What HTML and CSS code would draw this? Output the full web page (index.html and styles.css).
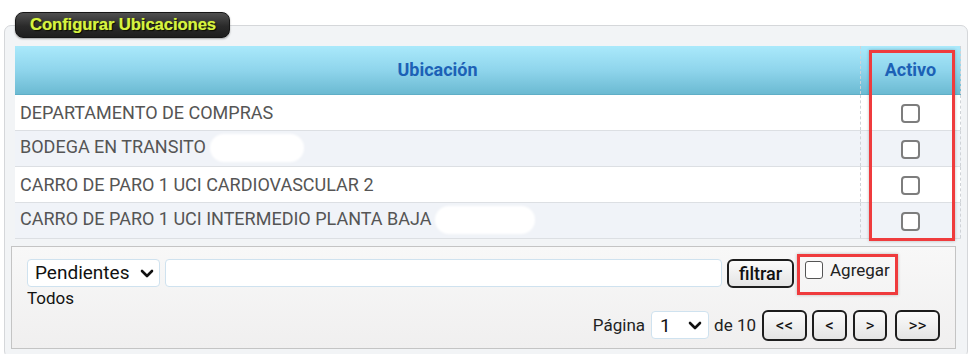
FILE: index.html
```html
<!DOCTYPE html>
<html lang="es">
<head>
<meta charset="utf-8">
<title>Configurar Ubicaciones</title>
<link rel="stylesheet" href="styles.css">
</head>
<body>
<div class="page">
  <div class="tab">Configurar Ubicaciones</div>
  <div class="panel">
    <div class="grid-wrap">
      <table class="grid">
        <thead>
          <tr><th class="c-name">Ubicación</th><th class="c-act">Activo</th></tr>
        </thead>
        <tbody>
          <tr><td class="c-name">DEPARTAMENTO DE COMPRAS<span class="blot blot-tiny"></span></td><td class="c-act"><span class="cb"></span></td></tr>
          <tr class="alt"><td class="c-name">BODEGA EN TRANSITO<span class="blot blot-a"></span></td><td class="c-act"><span class="cb"></span></td></tr>
          <tr><td class="c-name">CARRO DE PARO 1 UCI CARDIOVASCULAR 2</td><td class="c-act"><span class="cb"></span></td></tr>
          <tr class="alt"><td class="c-name">CARRO DE PARO 1 UCI INTERMEDIO PLANTA BAJA<span class="blot blot-b"></span></td><td class="c-act"><span class="cb"></span></td></tr>
        </tbody>
      </table>
      <div class="mark mark-col"></div>
    </div>
    <div class="footer">
      <div class="frow">
        <div class="sel sel-estado">
          <select><option>Pendientes</option><option>Todos</option></select>
          <svg class="chev" width="14" height="9" viewBox="0 0 14 9"><path d="M2 2 L7 7 L12 2" fill="none" stroke="#111" stroke-width="2.6" stroke-linecap="round" stroke-linejoin="round"/></svg>
        </div>
        <input class="txt" type="text">
        <button class="btn btn-filtrar">filtrar</button>
        <label class="agregar mark"><span class="cb cb-sm"></span>Agregar</label>
      </div>
      <div class="todos">Todos</div>
      <div class="pager">
        <span class="lbl">Página</span>
        <div class="sel sel-page">
          <select><option>1</option></select>
          <svg class="chev" width="14" height="9" viewBox="0 0 14 9"><path d="M2 2 L7 7 L12 2" fill="none" stroke="#111" stroke-width="2.6" stroke-linecap="round" stroke-linejoin="round"/></svg>
        </div>
        <span class="lbl lbl-de">de 10</span>
        <button class="btn pg pg-first">&lt;&lt;</button>
        <button class="btn pg pg-prev">&lt;</button>
        <button class="btn pg pg-next">&gt;</button>
        <button class="btn pg pg-last">&gt;&gt;</button>
      </div>
    </div>
  </div>
</div>
</body>
</html>
```
FILE: styles.css
```css
* { box-sizing: border-box; }
html, body { margin: 0; padding: 0; background: #ffffff; }
body { font-family: Roboto, "Liberation Sans", Arial, sans-serif; color: #222; }

.page { padding: 12px 4px 0 4px; }

.tab {
  position: relative;
  z-index: 2;
  width: 215px;
  height: 26px;
  margin-left: 11px;
  border: 1px solid #161616;
  border-radius: 8px;
  background: linear-gradient(#505050, #2a2a2a 55%, #1e1e1e);
  box-shadow: 0 1px 2px rgba(0,0,0,0.35);
  color: #d6f441;
  font-family: "Liberation Sans", Arial, sans-serif;
  font-weight: bold;
  font-size: 16.7px;
  line-height: 24px;
  padding-left: 14px;
  letter-spacing: -0.1px;
  text-shadow: 0 0 1px #8fa51c, 1px 1px 1px #000;
}

.panel {
  margin-top: -13px;
  border: 1px solid #d5d7da;
  border-radius: 7px;
  background: #f2f4f6;
  padding: 20px 6px 8px 6px;
}

.grid-wrap { position: relative; margin-left: 4px; width: 946px; }

.grid {
  width: 946px;
  border-collapse: collapse;
  table-layout: fixed;
  font-size: 18px;
}
.grid th {
  height: 48px;
  padding: 0;
  background: linear-gradient(#aae9fb, #8fd5ec 50%, #6bbad2);
  border-bottom: 1px solid #5faec6;
  color: #1c61b6;
  font-size: 18px;
  font-weight: bold;
  text-align: center;
}
.grid th.c-act { width: 100px; }
.grid .c-act {
  border-left: 1px dashed #cfd3d7;
  border-right: 1px dashed #cfd3d7;
  text-align: center;
}
.grid td {
  height: 36px;
  padding: 0 0 0 5px;
  background: #ffffff;
  border-bottom: 1px solid #dcdfe3;
  color: #555;
  white-space: nowrap;
}
.grid tr.alt td { background: #f0f3f8; }
.grid td.c-act { padding: 0; }

.blot {
  display: inline-block;
  vertical-align: middle;
  background: #ffffff;
  border-radius: 14px;
  filter: blur(1px);
}
.blot-tiny { width: 3px; height: 10px; margin-left: 3px; }
.blot-a { width: 94px; height: 28px; margin-left: 4px; }
.blot-b { width: 100px; height: 28px; margin-left: 4px; }

.cb {
  display: inline-block;
  width: 19px;
  height: 19px;
  border: 2px solid #7d7d7d;
  border-radius: 4px;
  background: #fff;
  vertical-align: middle;
}

.mark {
  border: 3px solid #ef3b3d;
  box-shadow: 0 0 3px rgba(0,0,0,0.25);
}
.mark-col {
  position: absolute;
  left: 854px;
  top: 4px;
  width: 86px;
  height: 191px;
  pointer-events: none;
}

.footer {
  margin-top: 7px;
  width: 945px;
  border: 1px solid #c4c4c4;
  background: linear-gradient(#f8f8f8, #f0efef);
  padding: 12px 15px 7px 15px;
  font-size: 17px;
}

.frow { display: flex; align-items: flex-start; height: 29px; }

.sel { position: relative; display: inline-block; }
.sel select {
  appearance: none;
  -webkit-appearance: none;
  height: 28px;
  border: 1px solid #cfe2ef;
  border-radius: 4px;
  background: #fff;
  font-family: Roboto, "Liberation Sans", Arial, sans-serif;
  color: #111;
  outline: none;
}
.sel .chev { position: absolute; top: 10px; pointer-events: none; }
.sel-estado select { width: 133px; font-size: 19px; padding: 0 0 0 7px; }
.sel-estado .chev { left: 113px; }
.sel-page select { width: 58px; height: 28px; font-size: 19px; padding: 0 0 0 8px; }
.sel-page .chev { left: 37px; }

.txt {
  width: 557px;
  height: 28px;
  margin-left: 5px;
  border: 1px solid #cfe2ef;
  border-radius: 4px;
  background: #fff;
  outline: none;
}

.btn {
  height: 29px;
  border: 2px solid #1d1d1d;
  border-radius: 6px;
  background: linear-gradient(#fbfbfb, #e4e4e4);
  font-family: Roboto, "Liberation Sans", Arial, sans-serif;
  font-size: 18px;
  color: #111;
  padding: 0;
}
.btn-filtrar { width: 67px; margin-left: 5px; font-weight: 500; }

.agregar {
  display: flex;
  align-items: center;
  width: 101px;
  height: 41px;
  margin: -5px 0 0 3px;
  padding: 0 0 8px 5px;
  font-size: 17px;
  color: #222;
}
.cb-sm { width: 18px; height: 18px; border: 1.5px solid #555; border-radius: 3px; margin-right: 7px; }

.todos { height: 20px; line-height: 20px; color: #111; }

.pager {
  display: flex;
  justify-content: flex-end;
  align-items: center;
  margin-top: 2px;
  height: 31px;
}
.lbl { color: #222; font-size: 17px; }
.sel-page { margin-left: 6px; }
.lbl-de { margin-left: 5px; }
.pg { height: 31px; font-size: 17px; }
.pg-first { width: 45px; margin-left: 6px; }
.pg-prev { width: 35px; margin-left: 5px; }
.pg-next { width: 34px; margin-left: 6px; }
.pg-last { width: 45px; margin-left: 8px; }
```
